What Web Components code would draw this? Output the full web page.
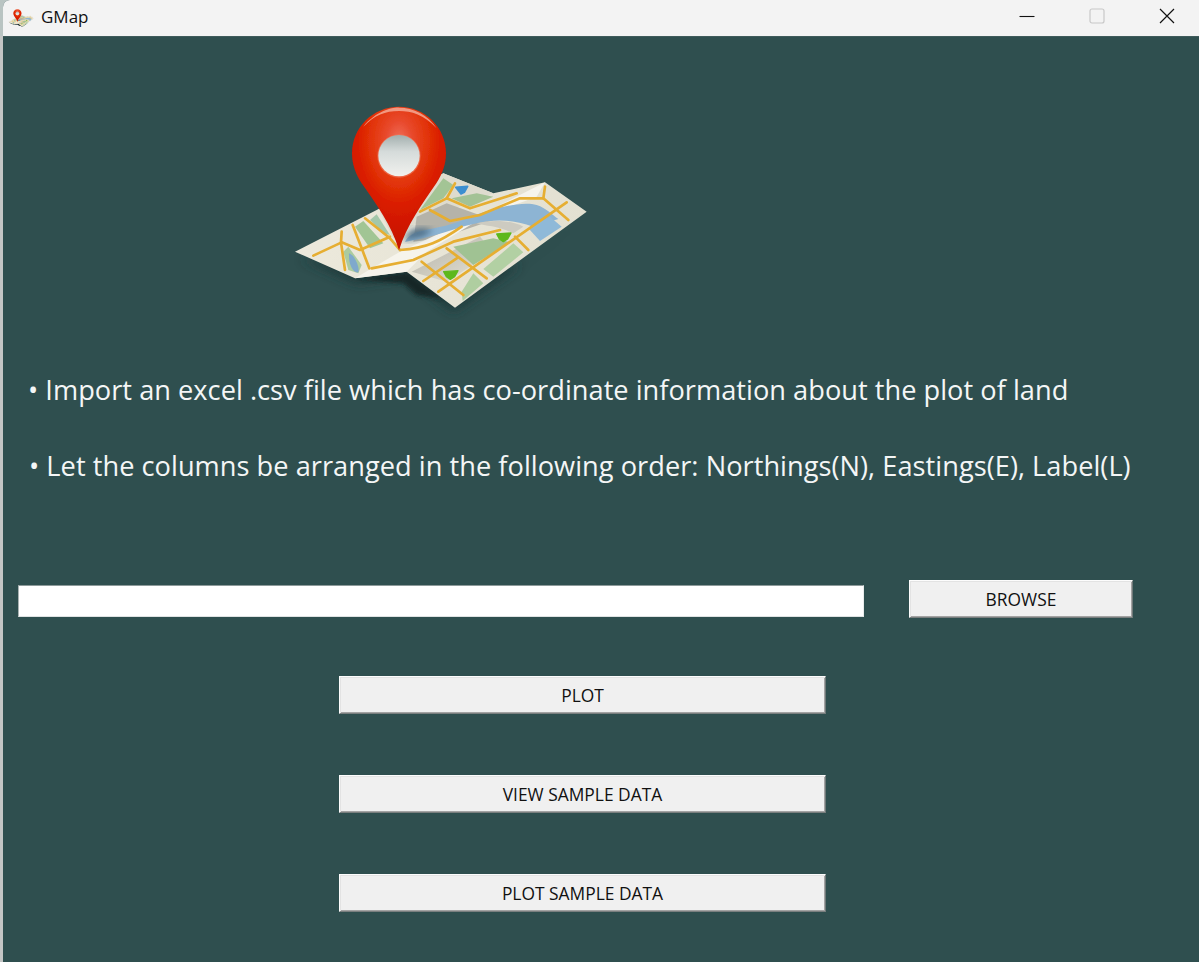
<!DOCTYPE html>
<html lang="en"><head><meta charset="utf-8"><title>GMap</title>
<style>html,body{margin:0;padding:0;height:962px;overflow:hidden;background:linear-gradient(#b9c4c2 0 36px,#c4c6c5 36px)}</style>
</head><body>
<gmap-window>
  <gmap-titlebar slot="title">GMap</gmap-titlebar>
  <gmap-logo class="hero"></gmap-logo>
  <gmap-note style="--gap:51px;--nudge:25px;--ls:.025px">• Import an excel .csv file which has co-ordinate information about the plot of land</gmap-note>
  <gmap-note style="--gap:38px;--nudge:26px;--ls:.035px">• Let the columns be arranged in the following order: Northings(N), Eastings(E), Label(L)</gmap-note>
  <gmap-file-row label="BROWSE"></gmap-file-row>
  <gmap-actions>
    <gmap-button>PLOT</gmap-button>
    <gmap-button>VIEW SAMPLE DATA</gmap-button>
    <gmap-button>PLOT SAMPLE DATA</gmap-button>
  </gmap-actions>
</gmap-window>
<script>
function def(name, html, setup){
  customElements.define(name, class extends HTMLElement{
    constructor(){super();const r=this.attachShadow({mode:'open'});r.innerHTML=html;}
    connectedCallback(){ if(setup) setup(this); }
  });
}
def('gmap-window',`<style>
:host{display:flex;flex-direction:column;height:962px;margin-left:3px;background:#2f4f4f;border-top-left-radius:7px;overflow:hidden;font-family:"Open Sans","Noto Sans",sans-serif;color:#f4f6f6}
main{display:flex;flex-direction:column;flex:1}
::slotted(gmap-logo){margin:58px 0 0 277px}
</style><slot name="title"></slot><main><slot></slot></main>`);

def('gmap-titlebar',`<style>
:host{display:flex;align-items:center;height:37px;flex:none;background:#f3f3f3;color:#111;border-bottom:1px solid #3f5b5b;box-sizing:border-box;font:17px "Open Sans","Noto Sans",sans-serif}
.ic{display:flex;align-self:flex-start;margin:8px 6px 0 4px}
.t{flex:1;padding-bottom:3px}
.ctl{display:flex;align-items:center;align-self:flex-start;width:70px;height:32px;justify-content:center}
.ctl:last-child{margin-right:-3px}
svg{display:block}
</style><span class="ic"><gmap-logo style="--w:28px;--h:20px"></gmap-logo></span><span class="t"><slot></slot></span>
<span class="ctl"><svg width="16" height="16" viewBox="0 0 16 16"><path d="M0.5 8.5H15.5" stroke="#111" stroke-width="1.1"/></svg></span>
<span class="ctl"><svg width="16" height="16" viewBox="0 0 16 16"><rect x="1" y="1" width="14" height="14" rx="2" fill="none" stroke="#c8c8c8" stroke-width="1.2"/></svg></span>
<span class="ctl"><svg width="16" height="16" viewBox="0 0 16 16"><path d="M1 1L15 15M15 1L1 15" stroke="#111" stroke-width="1.2"/></svg></span>`);

def('gmap-logo',`<style>
:host{display:block;flex:none;width:var(--w,320px);height:var(--h,225px)}
svg{display:block;width:100%;height:100%}
</style>
<svg viewBox="0 0 960 675" preserveAspectRatio="xMidYMid meet">
<defs>
<radialGradient id="red" cx="50%" cy="24%" r="72%"><stop offset="0" stop-color="#f0705c"/><stop offset=".2" stop-color="#e8492c"/><stop offset=".42" stop-color="#e23408"/><stop offset=".62" stop-color="#da1c00"/><stop offset="1" stop-color="#c61200"/></radialGradient>
<linearGradient id="hole" x1="0" y1="0" x2="0" y2="1"><stop offset="0" stop-color="#a3afae"/><stop offset=".4" stop-color="#d5dbda"/><stop offset="1" stop-color="#f1f1ee"/></linearGradient>
<linearGradient id="sh" x1="0" y1="0" x2="1" y2="1"><stop offset="0" stop-color="#8d8c84"/><stop offset="1" stop-color="#e9e6da"/></linearGradient>
<linearGradient id="pan" x1="0" y1="0" x2="1" y2="0"><stop offset="0" stop-color="#ece9dc"/><stop offset="1" stop-color="#e3e0d1"/></linearGradient>
<filter id="b1" x="-20%" y="-20%" width="140%" height="140%"><feGaussianBlur stdDeviation="16"/></filter>
<filter id="b2" x="-20%" y="-20%" width="140%" height="140%"><feGaussianBlur stdDeviation="7"/></filter>
<filter id="b0" x="-5%" y="-5%" width="110%" height="110%"><feGaussianBlur stdDeviation="1.8"/></filter>
<filter id="b3" x="-20%" y="-20%" width="140%" height="140%"><feGaussianBlur stdDeviation="9"/></filter>
</defs>
<path d="M60 490L230 565L380 545L520 650L930 365L720 510L380 525Z" fill="#1e3838" opacity=".9" filter="url(#b1)"/>
<path d="M235 552L385 532L490 612L410 600L370 565Z" fill="#142626" filter="url(#b2)"/>
<g filter="url(#b0)">
<path d="M45 470L290 345L490 235L640 295L795 262L920 350L525 638L380 530L225 550Z" fill="url(#pan)"/>
<path d="M490 235L640 295L410 385L340 430L300 350Z" fill="#dedbce"/>
<path d="M395 530L600 425L640 470L500 560Z" fill="url(#sh)" opacity=".6"/>
<path d="M410 365L500 325L640 375L480 430L400 440Z" fill="#b5b3a9"/>
<path d="M225 550L360 470L630 345L795 262L770 305L620 360L440 470L380 530Z" fill="#f6f4ec"/>
<path d="M375 440C400 395 470 412 560 370C650 335 730 318 770 330C800 340 815 358 835 372L760 395C700 372 640 372 590 385C520 400 470 425 378 440Z" fill="#8db4d3"/>
<path d="M372 438C385 395 420 395 460 405L430 425Z" fill="#4f7088" filter="url(#b3)"/>
<path d="M745 400L810 365L845 395L780 438Z" fill="#8fb9d8"/>
<path d="M590 385C640 372 700 378 730 395L700 415C650 390 620 395 590 385Z" fill="#cdcbc1"/>
<path d="M520 455L640 430L690 442L580 510Z" fill="#a0c293"/>
<path d="M610 522L700 445L730 472L640 545Z" fill="#b2d0a3"/>
<path d="M545 590L580 535L610 565L548 618Z" fill="#afcea0"/>
<path d="M420 345L490 250L520 270L490 310Z" fill="#a3c495"/>
<path d="M515 310L590 295L640 305L570 335Z" fill="#a3c295"/>
<path d="M225 395L250 378L310 445L270 460Z" fill="#a1c594"/>
<path d="M270 375L290 358L330 420L310 415Z" fill="#a3c7aa"/>
<path d="M190 470L205 455L245 510L235 535L205 525Z" fill="#abcb9f"/>
<path d="M207 475C225 480 240 520 235 532C220 535 205 510 207 475Z" fill="#7fa9cc"/>
<g fill="none" stroke="#e6ae30" stroke-width="8" stroke-linecap="round" stroke-linejoin="round">
<path d="M100 482L185 442L240 465L330 425"/>
<path d="M185 410L183 442L195 525"/>
<path d="M218 390L245 460L268 520"/>
<path d="M255 370L330 430L360 465"/>
<path d="M275 520L400 495L520 440L660 405"/>
<path d="M360 465C440 460 480 440 545 395"/>
<path d="M420 350L500 310L525 265"/>
<path d="M500 310L570 340L710 295"/>
<path d="M450 345L510 378L600 360L720 310L790 310"/>
<path d="M790 310L795 275M790 310L865 375M860 322L475 590"/>
<path d="M500 460L620 550M425 500L550 600M430 558L530 490"/>
<path d="M705 425L745 465"/>
</g>
<path d="M527 277L563 274L553 292L543 297Z" fill="#3d8fd0" stroke="#3d8fd0" stroke-width="5" stroke-linejoin="round"/>
<path d="M650 417L693 414L683 432L670 440L658 432Z" fill="#5db81d" stroke="#5db81d" stroke-width="4" stroke-linejoin="round"/>
<path d="M491 530L534 527L524 545L511 553L499 545Z" fill="#5db81d" stroke="#5db81d" stroke-width="4" stroke-linejoin="round"/>
<path d="M357 466C335 390 290 330 245 265C225 235 216 205 216 175C216 97 279 35 357 35C435 35 498 97 498 175C498 205 489 235 469 265C425 330 380 390 357 466Z" fill="url(#red)"/>
<path d="M250 95C290 45 345 36 357 38C400 38 445 60 470 100C430 58 395 48 357 48C315 48 285 60 250 95Z" fill="#f5b09c" opacity=".8"/>
<circle cx="357" cy="183" r="65" fill="#f27f60" opacity=".6"/>
<circle cx="357" cy="182" r="62" fill="url(#hole)"/>
</g>
</svg>`);

def('gmap-note',`<style>
:host{display:block;margin:var(--gap,0) 0 0 var(--nudge,0);font-size:27.2px;line-height:38px;letter-spacing:var(--ls,0);white-space:nowrap}
</style><slot></slot>`);

def('gmap-file-row',`<style>
:host{display:flex;align-items:center;gap:45px;margin:95px 0 0 15px}
.field{width:846px;height:32px;margin-top:4px;box-sizing:border-box;background:#fff;border:1px solid;border-color:#8d9a9a #e9ecec #dfe3e3 #a9b3b3;padding:0;outline:none;flex:none}
gmap-button{--bw:224px}
</style><input class="field" type="text" aria-label="File path"><gmap-button></gmap-button>`,
(el)=>{el.shadowRoot.querySelector('gmap-button').textContent=el.getAttribute('label');});

def('gmap-actions',`<style>
:host{display:flex;flex-direction:column;gap:61px;margin:58px 0 0 336px}
::slotted(gmap-button){--bw:487px}
</style><slot></slot>`);

def('gmap-button',`<style>
:host{display:flex;align-items:center;justify-content:center;width:var(--bw,487px);height:38px;box-sizing:border-box;background:#f0f0f0;color:#111;font:17.4px "Open Sans","Noto Sans",sans-serif;border:1px solid;border-color:#fdfdfd #6f7878 #7a7f7f #fdfdfd;box-shadow:inset 1px 1px 0 #e3e3e3,inset -1px -1px 0 #a3a3a3;cursor:default}
</style><slot></slot>`);
</script>
</body></html>
